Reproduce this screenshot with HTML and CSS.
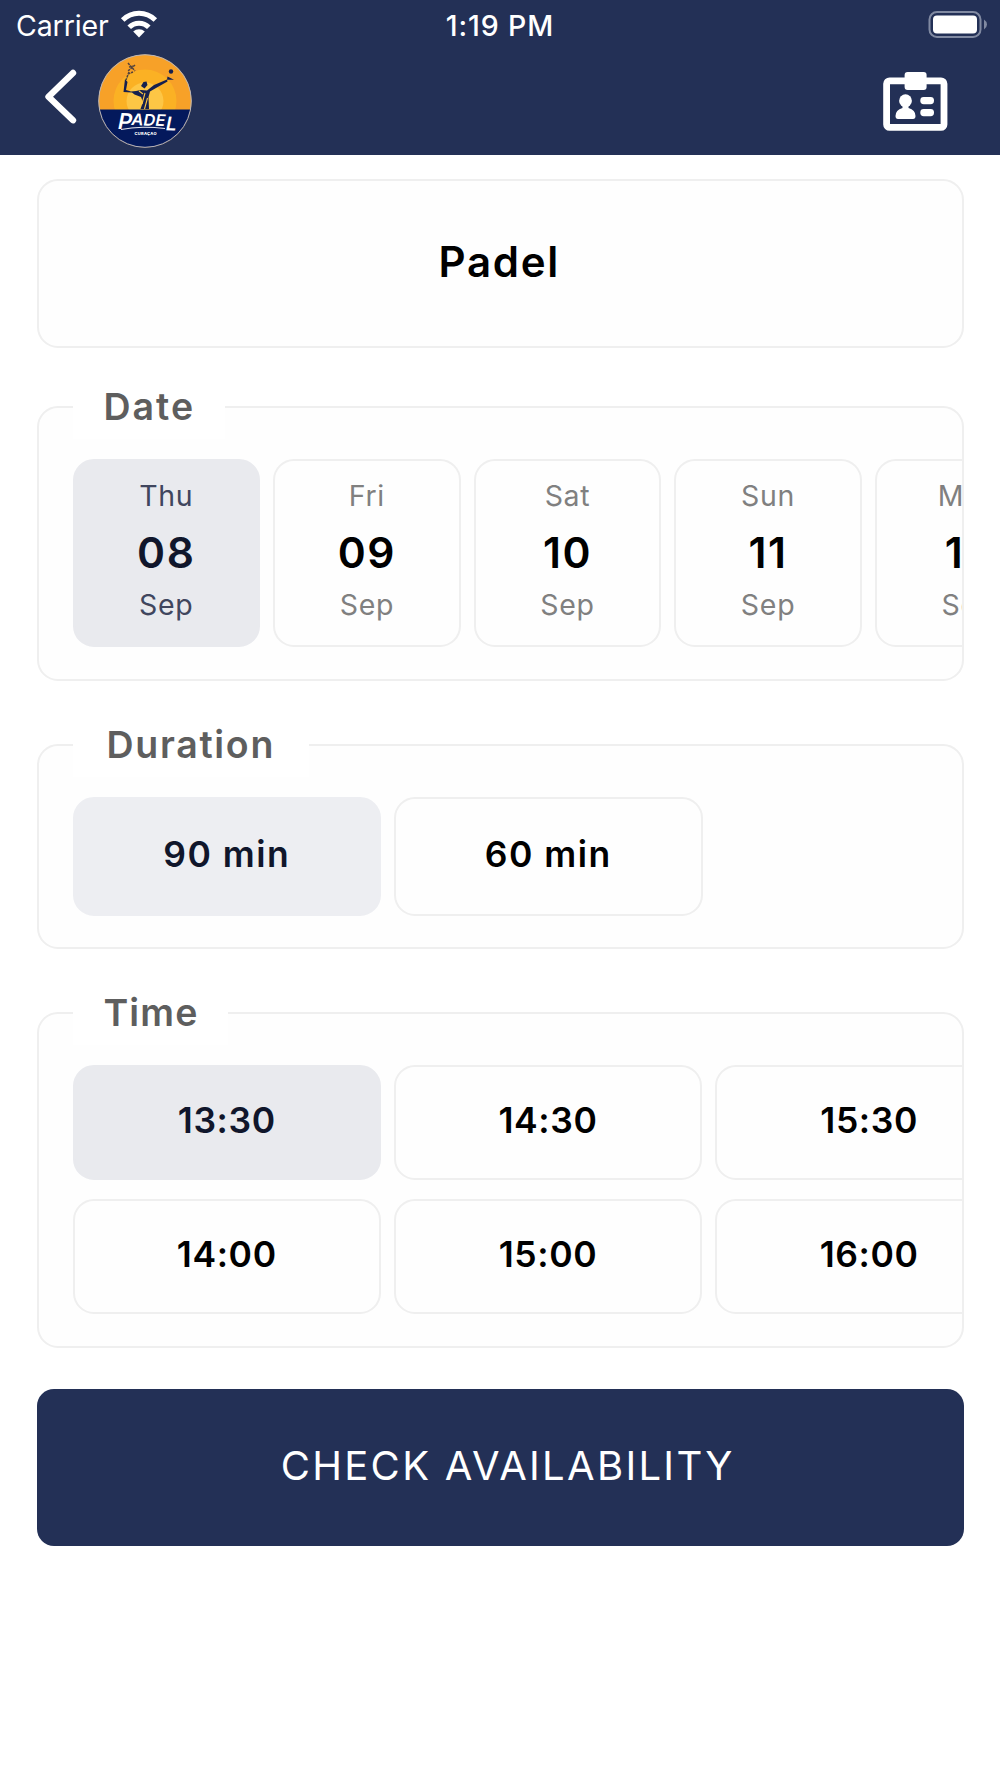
FILE: index.html
```html
<!DOCTYPE html>
<html lang="en">
  <head>
    <meta charset="UTF-8" />
    <meta name="viewport" content="width=device-width, initial-scale=1.0" />
    <title>Padel</title>
    <link rel="stylesheet" href="styles.css">
  </head>
  <body>
    <header class="header">
      <div class="status-bar">
        <div class="carrier">
          <span class="carrier-name">Carrier</span>
          <svg class="wifi" width="38" height="28" viewBox="0 0 38 28">
            <path d="M19 27.5 L13.2 21.6 A8.2 8.2 0 0 1 24.8 21.6 Z" fill="#fff" />
            <path d="M9.2 17.3 A13.7 13.7 0 0 1 28.8 17.3" fill="none" stroke="#fff" stroke-width="5" />
            <path d="M2.7 10 A23 23 0 0 1 35.3 10" fill="none" stroke="#fff" stroke-width="5" />
          </svg>
        </div>
        <span class="clock">1:19 PM</span>
        <svg class="battery" width="60" height="28" viewBox="0 0 60 28">
          <rect x="1.5" y="1" width="51" height="25" rx="7.5" fill="none" stroke="#818aa2" stroke-width="2" />
          <rect x="5" y="4.5" width="44" height="18" rx="4" fill="#fff" />
          <path d="M56 8.5 Q59 10.5 59 13.5 Q59 16.5 56 18.5 Z" fill="#818aa2" />
        </svg>
      </div>
      <div class="nav-bar">
        <svg class="back" width="34" height="56" viewBox="0 0 34 56">
          <path d="M29 4 L4.5 27.8 L29 51.2" fill="none" stroke="#fff" stroke-width="6.4" stroke-linecap="round" stroke-linejoin="round" />
        </svg>
        <svg class="logo" width="94" height="94" viewBox="0 0 94 94">
          <clipPath id="disc"><circle cx="47" cy="47" r="46.5" /></clipPath>
          <g clip-path="url(#disc)">
            <rect width="94" height="94" fill="#f7a128" />
            <circle cx="47" cy="47" r="31.5" fill="#fbb124" />
            <circle cx="47" cy="47" r="18.5" fill="#fdc645" />
            <rect y="55.5" width="94" height="39" fill="#04195c" />
          </g>
          <circle cx="47" cy="47" r="46.3" fill="none" stroke="#b9b6bb" stroke-width="1" />
          <!-- player -->
          <g fill="#15204f">
            <path d="M27 25 L29.5 28 L28 36 L33 37.5 L38 37 L43 36 L49 36.5 L56 31 L69 25.5 L69.5 27.5 L58 34 L52 37.5 L50.5 43 L51 55 L42.5 55 L45 48 L43 43 L36.5 40.5 L34 38.5 L25.5 38 Z" />
            <path d="M43 32 L45.5 28 L48.5 27.5 L49.5 31 L46.5 34.5 Z" />
            <circle cx="73" cy="17.5" r="2.2" />
            <path d="M69.5 22.5 L76 25.8 L69 25.8 Z" />
          </g>
          <path d="M30 9 L37 17 M37 11 L30 17 M31 13 L36 12 M30 20 L35 18 M31 18 L28 26" fill="none" stroke="#54433c" stroke-width="1.5" stroke-dasharray="2.5 0.8" />
          <path d="M47 39 L44 50 M49.5 44 L46.5 55 M41 37 L45 40" stroke="#fdc645" stroke-width="1.1" />
          <g fill="#fff" transform="rotate(2 47 67)">
            <text class="logo-letter logo-letter-tall" x="20" y="76">P</text>
            <text class="logo-name" x="33.5" y="71.5" textLength="34" lengthAdjust="spacingAndGlyphs">ADE</text>
            <text class="logo-letter" x="68" y="75.5">L</text>
          </g>
          <path d="M23 75.5 Q45 71.5 67 74.5" fill="none" stroke="#fff" stroke-width="0.9" />
          <text class="logo-place" x="36.5" y="81" textLength="22">CURAÇAO</text>
        </svg>
        <svg class="badge" width="65" height="60" viewBox="0 0 65 60">
          <rect x="3.6" y="8.8" width="57.4" height="46.6" rx="3" fill="none" stroke="#fff" stroke-width="6.8" />
          <rect x="21.6" y="0" width="22" height="18" rx="3" fill="#fff" />
          <circle cx="22.5" cy="28.7" r="6.4" fill="#fff" />
          <path d="M19.5 33 H25.5 V36 Q32.5 38 32.5 44 Q32.5 47 30 47 H15 Q12.5 47 12.5 44 Q12.5 38 19.5 36 Z" fill="#fff" />
          <rect x="37.3" y="25" width="13.7" height="7.2" rx="3.4" fill="#fff" />
          <rect x="37.3" y="37" width="13.7" height="7.2" rx="3.4" fill="#fff" />
        </svg>
      </div>
    </header>

    <main class="content">
      <section class="card sport">
        <h1 class="sport-name">Padel</h1>
      </section>

      <section class="card date">
        <h2 class="card-label">Date</h2>
        <div class="scroller">
          <div class="option day selected">
            <span class="weekday">Thu</span>
            <span class="number">08</span>
            <span class="month">Sep</span>
          </div>
          <div class="option day">
            <span class="weekday">Fri</span>
            <span class="number">09</span>
            <span class="month">Sep</span>
          </div>
          <div class="option day">
            <span class="weekday">Sat</span>
            <span class="number">10</span>
            <span class="month">Sep</span>
          </div>
          <div class="option day">
            <span class="weekday">Sun</span>
            <span class="number">11</span>
            <span class="month">Sep</span>
          </div>
          <div class="option day">
            <span class="weekday">Mon</span>
            <span class="number">12</span>
            <span class="month">Sep</span>
          </div>
        </div>
      </section>

      <section class="card duration">
        <h2 class="card-label">Duration</h2>
        <div class="scroller">
          <div class="option length selected">90 min</div>
          <div class="option length">60 min</div>
        </div>
      </section>

      <section class="card time">
        <h2 class="card-label">Time</h2>
        <div class="scroller slots">
          <div class="option slot selected">13:30</div>
          <div class="option slot">14:00</div>
          <div class="option slot">14:30</div>
          <div class="option slot">15:00</div>
          <div class="option slot">15:30</div>
          <div class="option slot">16:00</div>
        </div>
      </section>

      <button class="check-button">CHECK AVAILABILITY</button>
    </main>
  </body>
</html>
```
FILE: styles.css
```css
* {
  box-sizing: border-box;
}
body {
  margin: 0;
  min-height: 1778px;
  background-color: #fff;
  color: #000;
  font-family: "Inter", "Open Sans", sans-serif;
}
.header {
  height: 155px;
  background-color: #233056;
  color: #fff;
}
.status-bar {
  display: grid;
  grid-template-columns: 1fr auto 1fr;
  align-items: start;
  height: 54px;
  padding: 10px 12px 0 16px;
  font-size: 28.5px;
  line-height: 32px;
}
.carrier {
  display: flex;
  gap: 11px;
}
.carrier-name {
  letter-spacing: -0.1px;
}
.clock {
  margin-right: 4px;
  font-weight: 500;
  letter-spacing: 0.9px;
}
.battery {
  justify-self: end;
  margin-top: 1px;
}
.nav-bar {
  display: flex;
  align-items: flex-start;
  padding: 0 52px 0 44px;
}
.back {
  margin-top: 15px;
}
.logo {
  margin-left: 20px;
}
.logo-name {
  font-size: 16px;
  font-style: italic;
  font-weight: 600;
}
.logo-letter {
  font-size: 19px;
  font-style: italic;
  font-weight: 600;
}
.logo-letter-tall {
  font-size: 22px;
}
.logo-place {
  fill: #fff;
  font-size: 4px;
  font-weight: 800;
}
.badge {
  margin: 18px 0 0 auto;
}
.content {
  display: flex;
  flex-direction: column;
  padding: 24px 36px 0 36.5px;
}
.card {
  border: 2px solid #efefef;
  border-radius: 21px;
  background-color: #fefefe;
}
.sport {
  display: flex;
  align-items: center;
  justify-content: center;
  height: 169px;
}
.sport-name {
  margin: 0 2px 5px 0;
  font-size: 42px;
  font-weight: 600;
  letter-spacing: 1.7px;
}
.card-label {
  width: fit-content;
  height: 64px;
  margin: -33px 0 20px 34px;
  padding: 0 30px 0 31px;
  background-color: #fff;
  color: #5e5e5e;
  font-size: 37.5px;
  font-weight: 600;
  letter-spacing: 2px;
  line-height: 64px;
}
.date {
  height: 275px;
  margin-top: 58px;
}
.duration {
  height: 205px;
  margin-top: 63px;
}
.duration .card-label {
  padding: 0 34px;
  letter-spacing: 1.7px;
}
.time {
  height: 336px;
  margin-top: 63px;
}
.time .card-label {
  letter-spacing: 1.1px;
}
.scroller {
  display: flex;
  gap: 13px;
  padding-left: 34px;
  overflow: hidden;
}
.slots {
  display: grid;
  grid-template-rows: 115px 115px;
  grid-auto-columns: 308.5px;
  grid-auto-flow: column;
  gap: 19px 12.7px;
}
.option {
  display: flex;
  flex-shrink: 0;
  align-items: center;
  justify-content: center;
  border: 2px solid #efefef;
  border-radius: 21px;
  background-color: #fefefe;
}
.option.selected {
  border-color: #e9eaee;
  background-color: #e9eaee;
  color: #10162b;
}
.day {
  flex-direction: column;
  width: 187.6px;
  height: 188px;
  padding-bottom: 6px;
  font-size: 28.5px;
  letter-spacing: 0.7px;
}
.weekday,
.month {
  color: #808080;
  line-height: 34px;
}
.selected .weekday,
.selected .month {
  color: #40465e;
}
.number {
  margin: 17px 0 12px;
  font-size: 42.5px;
  font-weight: 600;
  letter-spacing: 1.6px;
  line-height: 46px;
}
.length {
  width: 308.5px;
  height: 119px;
  padding-bottom: 4px;
  font-size: 35.5px;
  font-weight: 600;
  letter-spacing: 1.5px;
}
.length.selected {
  border-color: #edeef2;
  background-color: #edeef2;
}
.slot {
  padding-bottom: 4px;
  font-size: 35.5px;
  font-weight: 600;
  letter-spacing: 0.6px;
}
.check-button {
  height: 157px;
  margin-top: 41px;
  padding: 0 0 4px 15px;
  border: none;
  border-radius: 17px;
  background-color: #233056;
  color: #fff;
  font-family: inherit;
  font-size: 40px;
  font-weight: 400;
  letter-spacing: 2.3px;
}
```
